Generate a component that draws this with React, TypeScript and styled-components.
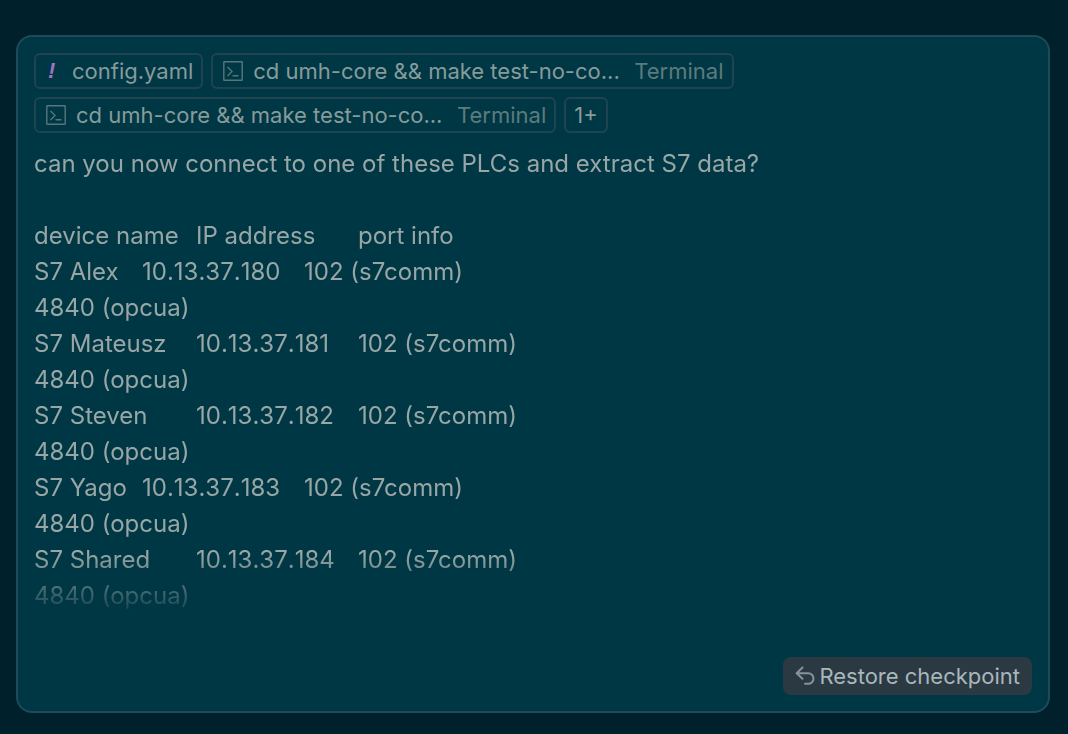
import React from "react";
import styled, { createGlobalStyle } from "styled-components";

const GlobalStyle = createGlobalStyle`
  * { box-sizing: border-box; }
  body {
    margin: 0;
    background: #00212b;
    font-family: Inter, "Liberation Sans", sans-serif;
  }
`;

const Page = styled.main`
  padding: 35px 18px 21px 16px;
`;

const Card = styled.article`
  display: flex;
  flex-direction: column;
  padding: 16px;
  border: 2px solid #1f4a57;
  border-radius: 16px;
  background: #003745;
`;

const ContextList = styled.div`
  display: flex;
  flex-wrap: wrap;
  gap: 8px;
  max-width: 720px;
`;

const Chip = styled.button`
  display: inline-flex;
  align-items: center;
  gap: 10px;
  height: 36px;
  padding: 0 8px 0 ${({ $plain }: { $plain?: boolean }) => ($plain ? "8px" : "10px")};
  border: 2px solid #1f4350;
  border-radius: 6px;
  background: transparent;
  color: #879b9a;
  font: inherit;
  font-size: 22px;
  line-height: 32px;
  white-space: nowrap;
`;

const Command = styled.span`
  min-width: 371px;
  font-weight: 425;
  text-align: left;
`;

const ChipDetail = styled.span`
  color: #5c7b7e;
`;

const YamlMark = styled.span`
  width: 16px;
  padding-left: 2px;
  color: #a074c4;
  font-family: "Liberation Sans", sans-serif;
  font-size: 22px;
  font-style: italic;
  font-weight: 700;
  text-align: left;
`;

const Message = styled.div`
  margin-top: 13px;
  padding-bottom: 6px;
  color: #98a6a5;
  font-size: 24px;
  line-height: 36px;
  mask-image: linear-gradient(to top, transparent 0, #000 66px);
`;

const Line = styled.p`
  min-height: 36px;
  margin: 0;
  white-space: pre-wrap;
  tab-size: 54px;
`;

const Address = styled.span`
  font-kerning: none;
`;

const Footer = styled.footer`
  display: flex;
  justify-content: flex-end;
  margin-top: 37px;
`;

const RestoreButton = styled.button`
  display: inline-flex;
  align-items: center;
  gap: 4px;
  height: 38px;
  padding: 0 12px;
  border: 0;
  border-radius: 8px;
  background: #2b3a42;
  color: #a9b7bd;
  font: inherit;
  font-size: 22px;
  font-weight: 425;
  line-height: 38px;
  white-space: nowrap;
`;

const Icon = styled.svg`
  flex: none;
  width: 20px;
  height: 20px;
  fill: none;
`;

const TerminalIcon = () => (
  <Icon viewBox="0 0 20 20" stroke="#577679" strokeWidth="1.4" aria-hidden="true">
    <rect x="0.8" y="0.8" width="18.4" height="18.4" rx="0.5" />
    <path d="M4.5 6L9 10.5L4.5 15M9.5 14.8H15.5" />
  </Icon>
);

const UndoIcon = () => (
  <Icon
    viewBox="0 0 20 20"
    stroke="#84949b"
    strokeWidth="2"
    strokeLinecap="round"
    strokeLinejoin="round"
    aria-hidden="true"
  >
    <path d="M7.5 1.5L1.6 7.2L7.5 12.8M1.8 7.2H13.2A5.3 5.3 0 0 1 13.2 17.8H10" />
  </Icon>
);

const devices = [
  { name: "S7 Alex", ip: "10.13.37.180" },
  { name: "S7 Mateusz", ip: "10.13.37.181" },
  { name: "S7 Steven", ip: "10.13.37.182" },
  { name: "S7 Yago", ip: "10.13.37.183" },
  { name: "S7 Shared", ip: "10.13.37.184" },
];

const TerminalChip = () => (
  <Chip type="button">
    <TerminalIcon />
    <Command>cd umh-core &amp;&amp; make test-no-co...</Command>
    <ChipDetail>Terminal</ChipDetail>
  </Chip>
);

export default function App() {
  return (
    <>
      <GlobalStyle />
      <Page>
        <Card>
          <ContextList>
            <Chip type="button">
              <YamlMark>!</YamlMark>
              <span>config.yaml</span>
            </Chip>
            <TerminalChip />
            <TerminalChip />
            <Chip type="button" $plain>
              1+
            </Chip>
          </ContextList>
          <Message>
            <Line>can you now connect to one of these PLCs and extract S7 data?</Line>
            <Line />
            <Line>{"device name\tIP address\tport info"}</Line>
            {devices.map(({ name, ip }) => (
              <React.Fragment key={ip}>
                <Line>
                  {`${name}\t`}
                  <Address>{ip}</Address>
                  {"\t102 (s7comm)"}
                </Line>
                <Line>4840 (opcua)</Line>
              </React.Fragment>
            ))}
          </Message>
          <Footer>
            <RestoreButton type="button">
              <UndoIcon />
              Restore checkpoint
            </RestoreButton>
          </Footer>
        </Card>
      </Page>
    </>
  );
}
